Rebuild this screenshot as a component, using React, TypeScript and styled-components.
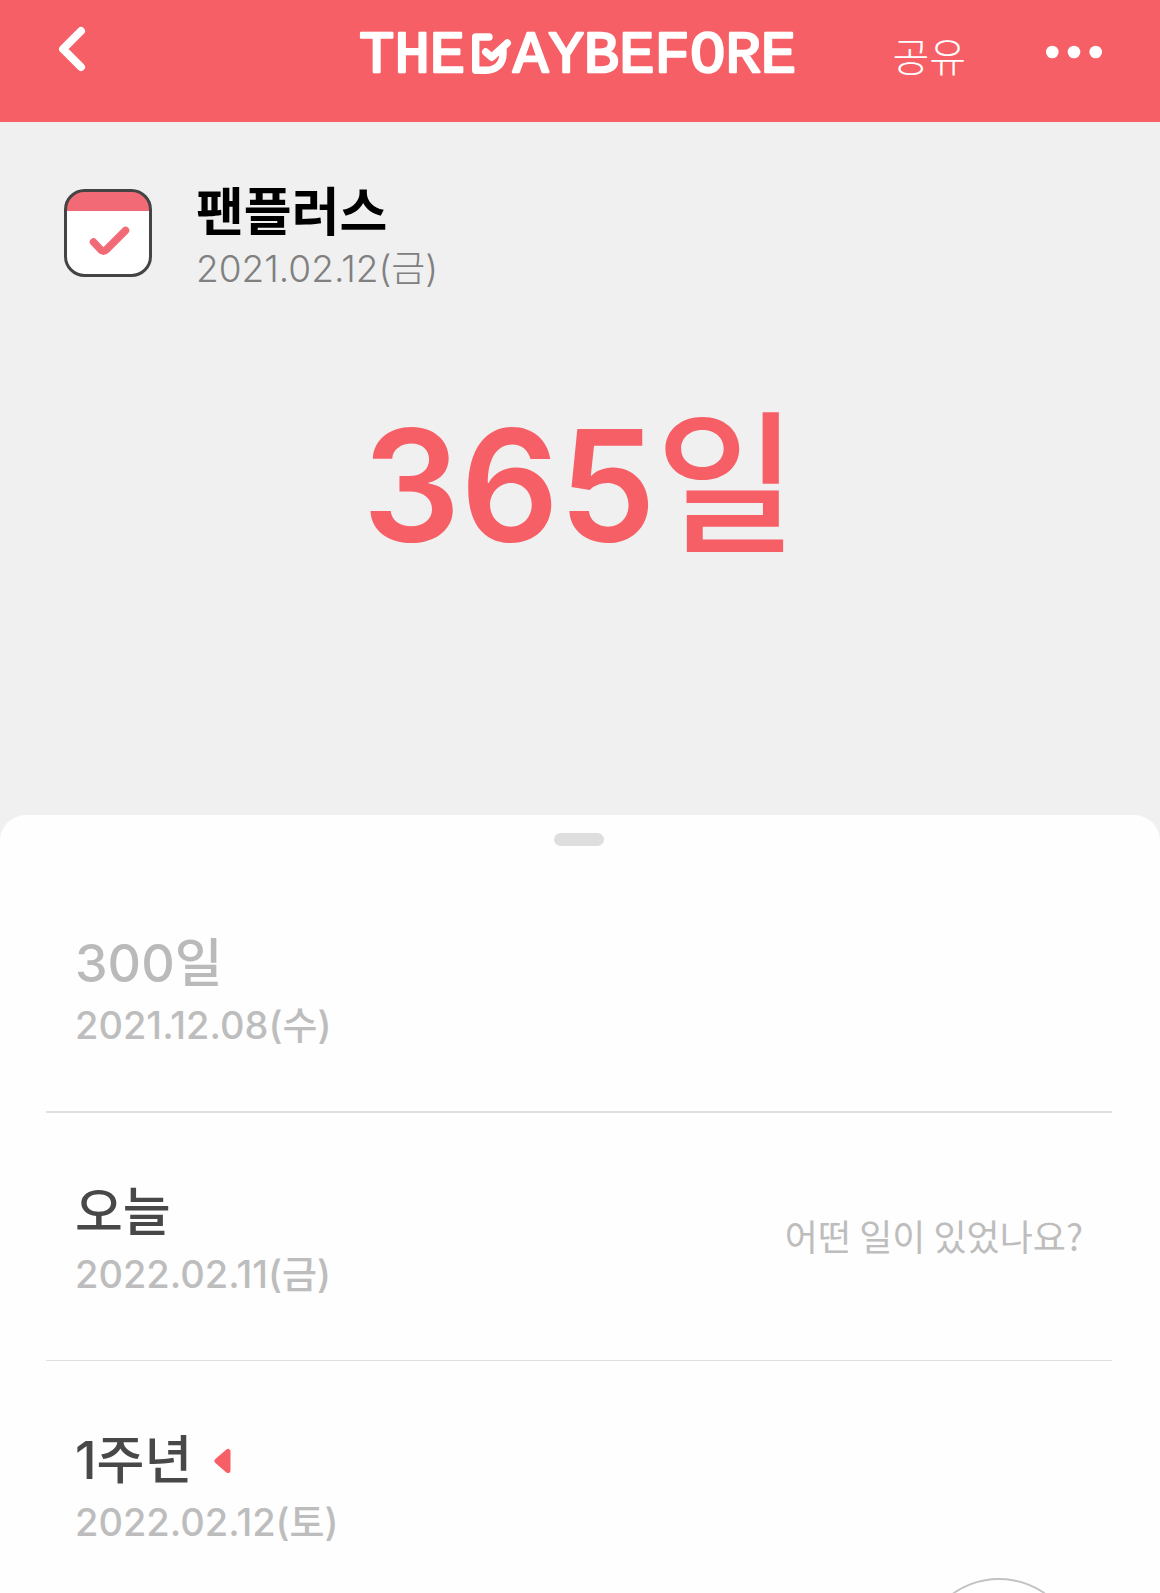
import React from "react";
import styled, { createGlobalStyle } from "styled-components";

const coral = "#f75f66";
const fontStack = `Inter, "Noto Sans CJK KR", "Noto Sans", sans-serif`;

const GlobalStyle = createGlobalStyle`
  *, *::before, *::after { box-sizing: border-box; }
  body {
    margin: 0;
    background: #f0f0f0;
    font-family: ${fontStack};
  }
  h1, h2, p, ul { margin: 0; padding: 0; }
`;

const Page = styled.div`
  display: flex;
  flex-direction: column;
  min-height: 100vh;
  overflow: hidden;
`;

const Header = styled.header`
  display: grid;
  grid-template-columns: 1fr auto 1fr;
  align-items: center;
  height: 122px;
  padding: 0 58px 16px;
  background: ${coral};
`;

const HeaderActions = styled.div`
  display: flex;
  align-items: center;
  justify-content: flex-end;
  gap: 80px;
`;

const BarButton = styled.button`
  display: flex;
  align-items: center;
  padding: 0;
  border: 0;
  background: none;
  color: #fff;
  cursor: pointer;
`;

const ShareButton = styled(BarButton)`
  padding-top: 10px;
  font: 300 40px/56px ${fontStack};
`;

const Hero = styled.section`
  display: flex;
  flex-direction: column;
  gap: 96px;
  height: 693px;
  padding: 51px 64px;
`;

const EventHead = styled.div`
  display: flex;
  align-items: center;
  gap: 44px;
`;

const EventText = styled.div`
  padding-top: 8px;
`;

const EventName = styled.h1`
  color: #000;
  font-size: 52px;
  font-weight: 700;
  line-height: 64px;
`;

const EventDate = styled.p`
  color: #808080;
  font-size: 37px;
  font-weight: 300;
  line-height: 48px;
`;

const DayCount = styled.p`
  color: ${coral};
  font-size: 154px;
  font-weight: 600;
  line-height: 192px;
  text-align: center;
`;

const DayUnit = styled.span`
  font-weight: 500;
`;

const Sheet = styled.main`
  display: flex;
  flex: 1;
  flex-direction: column;
  align-items: center;
  padding: 18px 48px 0 46px;
  border-radius: 26px 26px 0 0;
  background: #fefefe;
`;

const Handle = styled.div`
  width: 50px;
  height: 13px;
  border-radius: 7px;
  background: #dedede;
`;

const Timeline = styled.ul`
  width: 100%;
  padding-top: 19px;
  list-style: none;
`;

const Row = styled.li<{ $line: number }>`
  display: flex;
  align-items: center;
  justify-content: space-between;
  height: 248px;
  padding: 0 29px;
  border-bottom: ${(p) => p.$line}px solid #e0e0e0;
`;

const RowText = styled.div`
  padding-top: 10px;
`;

const RowTitle = styled.h2<{ $past?: boolean }>`
  display: flex;
  align-items: center;
  gap: 22px;
  color: ${(p) => (p.$past ? "#bababa" : "#484848")};
  font-size: 52px;
  font-weight: 500;
  line-height: 64px;
`;

const RowDate = styled.p`
  color: #bdbdbd;
  font-size: 38px;
  font-weight: 500;
  line-height: 58px;
`;

const NoteButton = styled.button`
  padding: 0 0 4px;
  border: 0;
  background: none;
  color: #bdbdbd;
  font: 400 36px/48px "Noto Sans CJK KR", sans-serif;
  cursor: pointer;
`;

const FloatingButton = styled.button`
  position: fixed;
  right: 80px;
  bottom: -147px;
  width: 162px;
  height: 162px;
  border: 2px solid #c2c2c2;
  border-radius: 50%;
  background: #fff;
`;

const Wordmark = () => (
  <svg width="452" height="80" viewBox="-8 -17 452 80" role="img" aria-label="THEDAYBEFORE">
    <g
      fill="#fff"
      stroke="#fff"
      strokeWidth="2.5"
      strokeLinejoin="round"
      fontFamily="'Liberation Mono', monospace"
      fontSize="59"
    >
      <text x="-3" y="42">THE</text>
      <text x="151" y="42">AYBEFORE</text>
    </g>
    <g fill="none" stroke="#fff" strokeWidth="7.4" strokeLinecap="round" strokeLinejoin="round">
      <path d="M127 7H113.700V40.300H124C134 40.300 141 34 141 24V19" />
      <path d="M123.700 22L129.700 27.300L145.300 13" />
    </g>
  </svg>
);

const BackIcon = () => (
  <svg width="28" height="54" viewBox="0 0 28 54" aria-hidden="true">
    <path d="M23 5L5 23L23 41" fill="none" stroke="#fff" strokeWidth="8" strokeLinecap="round" strokeLinejoin="round" />
  </svg>
);

const MoreIcon = () => (
  <svg width="56" height="16" viewBox="0 0 56 16" fill="#fff" aria-hidden="true">
    <circle cx="6.300" cy="7" r="6.300" />
    <circle cx="28" cy="7" r="6.300" />
    <circle cx="49.700" cy="7" r="6.300" />
  </svg>
);

const CalendarIcon = () => (
  <svg width="88" height="88" viewBox="0 0 88 88" aria-hidden="true">
    <rect x="1.500" y="1.500" width="85" height="85" rx="19" fill="#fff" />
    <path d="M1.500 22V20.500A19 19 0 0 1 20.500 1.500H67.500A19 19 0 0 1 86.500 20.500V22Z" fill="#f16a75" />
    <rect x="1.500" y="1.500" width="85" height="85" rx="19" fill="none" stroke="#444" strokeWidth="3" />
    <path d="M29.500 53L36.500 60.500Q39.500 63.500 42.500 60.500L61.500 41.500" fill="none" stroke="#f16a75" strokeWidth="7.500" strokeLinecap="round" strokeLinejoin="round" />
  </svg>
);

const Marker = () => (
  <svg width="17" height="26" viewBox="0 0 17 26" aria-hidden="true">
    <path d="M3 13L14 3.500V22.500Z" fill={coral} stroke={coral} strokeWidth="5" strokeLinejoin="round" />
  </svg>
);

type Entry = { title: string; date: string; line: number; past?: boolean; marked?: boolean; note?: string };

const entries: Entry[] = [
  { title: "300일", date: "2021.12.08(수)", line: 2, past: true },
  { title: "오늘", date: "2022.02.11(금)", line: 1, note: "어떤 일이 있었나요?" },
  { title: "1주년", date: "2022.02.12(토)", line: 0, marked: true },
];

export default function App() {
  return (
    <Page>
      <GlobalStyle />
      <Header>
        <BarButton aria-label="뒤로">
          <BackIcon />
        </BarButton>
        <Wordmark />
        <HeaderActions>
          <ShareButton>공유</ShareButton>
          <BarButton aria-label="더보기">
            <MoreIcon />
          </BarButton>
        </HeaderActions>
      </Header>
      <Hero>
        <EventHead>
          <CalendarIcon />
          <EventText>
            <EventName>팬플러스</EventName>
            <EventDate>2021.02.12(금)</EventDate>
          </EventText>
        </EventHead>
        <DayCount>
          365<DayUnit>일</DayUnit>
        </DayCount>
      </Hero>
      <Sheet>
        <Handle />
        <Timeline>
          {entries.map((entry) => (
            <Row key={entry.date} $line={entry.line}>
              <RowText>
                <RowTitle $past={entry.past}>
                  {entry.title}
                  {entry.marked && <Marker />}
                </RowTitle>
                <RowDate>{entry.date}</RowDate>
              </RowText>
              {entry.note && <NoteButton>{entry.note}</NoteButton>}
            </Row>
          ))}
        </Timeline>
      </Sheet>
      <FloatingButton aria-label="추가" />
    </Page>
  );
}
